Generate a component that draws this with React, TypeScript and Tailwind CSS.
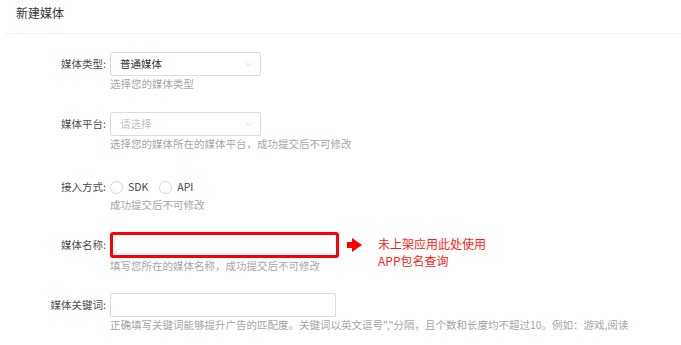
import { ChevronDown } from "lucide-react";

const Helper = ({ children }: { children: React.ReactNode }) => (
  <p className="text-[10.5px] leading-[16px] text-[#a6a6a6] whitespace-nowrap">{children}</p>
);

const Label = ({ children, h = "leading-[24px]" }: { children: React.ReactNode; h?: string }) => (
  <div className={`w-[105px] shrink-0 pr-[4px] text-right text-[10.5px] text-[#4d4d4d] ${h}`}>
    {children}
  </div>
);

const Select = ({ value, placeholder }: { value?: string; placeholder?: string }) => (
  <div className="flex h-[24px] w-[151px] items-center justify-between rounded-[2px] border border-[#dcdcdc] bg-white pl-[9px] pr-[6px]">
    <span className={`text-[10.5px] leading-none ${value ? "text-[#333]" : "text-[#c0c0c0]"}`}>
      {value ?? placeholder}
    </span>
    <ChevronDown className="h-[11px] w-[11px] text-[#c8c8c8]" strokeWidth={1.5} />
  </div>
);

const Radio = ({ label }: { label: string }) => (
  <div className="flex items-center gap-[5px]">
    <span className="h-[13px] w-[13px] rounded-full border border-[#d6d6d6] bg-white" />
    <span className="text-[10.5px] leading-none text-[#444]">{label}</span>
  </div>
);

export default function App() {
  return (
    <div className="min-h-[345px] w-[681px] bg-white pl-[5px] font-['Noto_Sans_CJK_SC','Microsoft_YaHei',sans-serif]">
      <div className="h-[34px] border-b border-[#f0f0f0] pl-[11px] pt-[5px]">
        <h1 className="text-[12px] leading-[16px] font-normal text-[#333]">新建媒体</h1>
      </div>

      <div className="flex flex-col">
        <div className="mt-[18px] flex">
          <Label>媒体类型:</Label>
          <div className="flex flex-col">
            <Select value="普通媒体" />
            <Helper>选择您的媒体类型</Helper>
          </div>
        </div>

        <div className="mt-[20px] flex">
          <Label>媒体平台:</Label>
          <div className="flex flex-col">
            <Select placeholder="请选择" />
            <Helper>选择您的媒体所在的媒体平台，成功提交后不可修改</Helper>
          </div>
        </div>

        <div className="mt-[25px] flex">
          <Label h="leading-[20px]">接入方式:</Label>
          <div className="flex flex-col">
            <div className="flex h-[20px] items-center gap-[11px]">
              <Radio label="SDK" />
              <Radio label="API" />
            </div>
            <Helper>成功提交后不可修改</Helper>
          </div>
        </div>

        <div className="mt-[19px] flex items-start">
          <Label h="leading-[26px]">媒体名称:</Label>
          <div className="flex flex-col">
            <div className="h-[26px] w-[229px] rounded-[3px] border-[3px] border-[#ff0000] bg-white" />
            <Helper>填写您所在的媒体名称，成功提交后不可修改</Helper>
          </div>
          <svg className="ml-[8px] mt-[6px] shrink-0" width="16" height="14" viewBox="0 0 16 14">
            <rect x="0" y="4" width="6" height="6" fill="#ff0000" />
            <polygon points="5,0 15,7 5,14" fill="#ff0000" />
          </svg>
          <div className="ml-[15px] mt-[3px] text-[12px] leading-[17px] text-[#ff1a1a]">
            <p>未上架应用此处使用</p>
            <p>APP包名查询</p>
          </div>
        </div>

        <div className="mt-[19px] flex">
          <Label>媒体关键词:</Label>
          <div className="flex flex-col">
            <div className="h-[24px] w-[226px] rounded-[2px] border border-[#dcdcdc] bg-white" />
            <Helper>
              {'正确填写关键词能够提升广告的匹配度。关键词以英文逗号","分隔，且个数和长度均不超过10。例如：游戏,阅读'}
            </Helper>
          </div>
        </div>
      </div>
    </div>
  );
}
